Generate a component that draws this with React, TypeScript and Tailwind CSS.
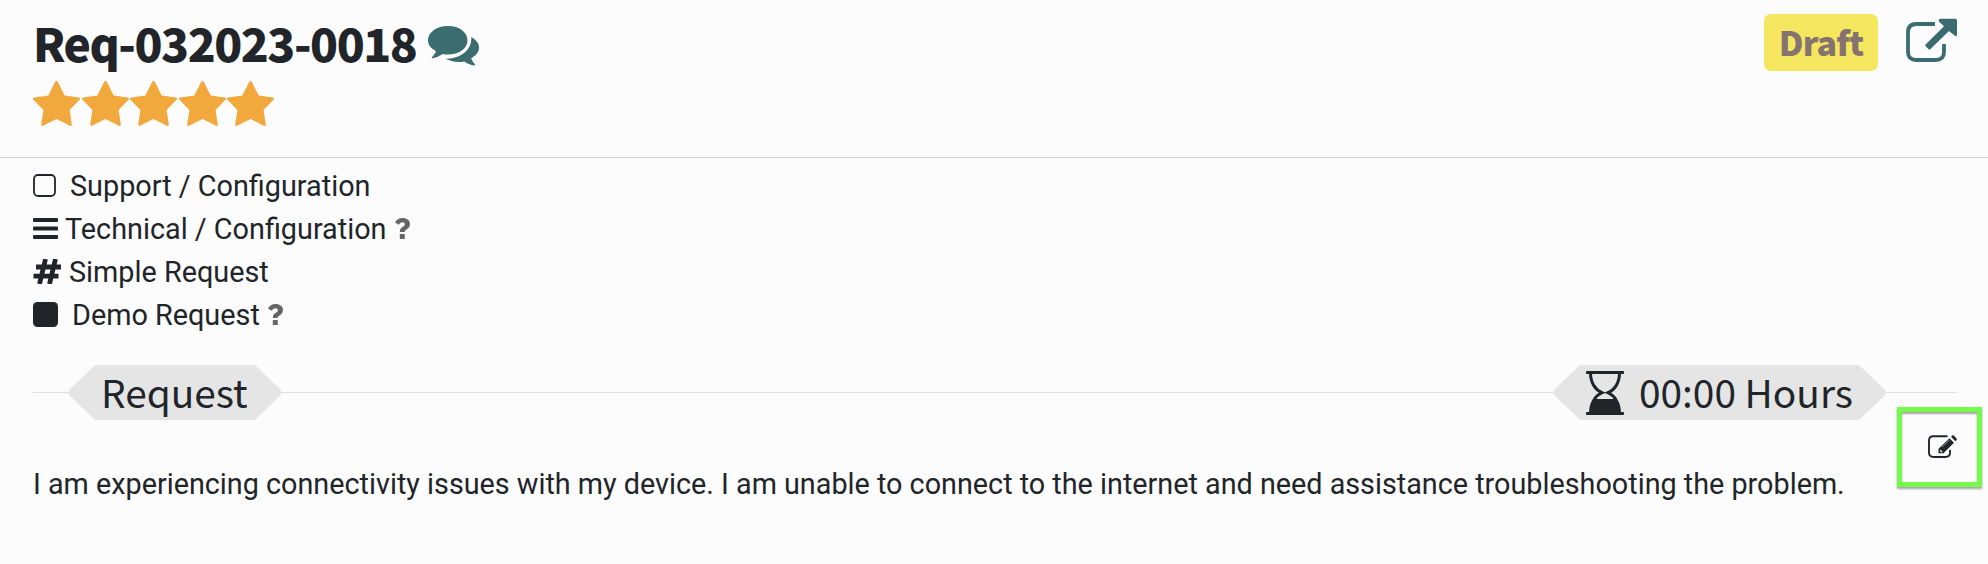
import type { ReactNode } from "react";

const INK = "#212529";

function CommentsIcon() {
  return (
    <svg width="51" height="40" viewBox="0 0 51 40" fill="#3b6c70">
      <path d="M20 0C31 0 39.500 6 39.500 14.300S31 28.500 20 28.500c-1.900 0-3.700-.1-5.400-.5C11.500 30.300 8 31.800 4.500 32.300c-.7.1-1-.6-.6-1.100C5.700 29.200 7.200 27.500 8 25.200 3 22.600 0 18.800 0 14.300 0 6 9 0 20 0Z" />
      <path d="M43.300 11C48 13.600 51 17.500 51 21.500c0 4.300-3 8.300-7.800 10.700.8 2.300 2 4 3.600 5.900.5.600.1 1.400-.7 1.300-3.700-.6-6.900-1.900-9.700-4-7 1.200-13.500.2-18.600-2.600 6.500-.1 12.500-1.700 17.200-5 5.800-4 8.800-10 8.300-16.800Z" />
    </svg>
  );
}

function StarIcon() {
  return (
    <svg width="47" height="45" viewBox="0 0 47 45" fill="#f1a93d">
      <path d="M22.100.9c.6-1.200 2.200-1.200 2.800 0l6.800 13.700 14.100 2c1.300.2 1.600 1.300.7 2.200L36.600 29l2.200 14.500c.2 1.200-.9 1.800-1.900 1.300L23.500 38l-13.400 6.800c-1 .5-2.100-.1-1.900-1.300L10.400 29 .5 18.800c-.9-.9-.6-2 .7-2.200l14.100-2Z" />
    </svg>
  );
}

function ExternalLinkIcon() {
  return (
    <svg width="51" height="44" viewBox="0 0 51 44">
      <path
        d="M29 6H10.500Q2 6 2 14V34Q2 42 10.500 42H29.500Q38 42 38 34V26"
        fill="none"
        stroke="#3b6c70"
        strokeWidth="3.800"
      />
      <path
        d="M34.500.8H49.500q1.500 0 1.500 1.500V17q0 2-1.800 1L43 13 24.300 31.300q-.8.8-1.600 0L19.600 28.200q-.8-.8 0-1.600L38 8.200 33.300 4Q31.800.8 34.500.8Z"
        fill="#3b6c70"
      />
    </svg>
  );
}

function SquareOutlineIcon() {
  return (
    <svg width="23" height="23" viewBox="0 0 23 23">
      <rect x="1" y="1" width="21" height="21" rx="4" fill="none" stroke={INK} strokeWidth="1.800" />
    </svg>
  );
}

function BarsIcon() {
  return (
    <svg width="25" height="21" viewBox="0 0 25 21" fill={INK}>
      <rect width="25" height="4" rx="1" />
      <rect y="8.500" width="25" height="4" rx="1" />
      <rect y="17" width="25" height="4" rx="1" />
    </svg>
  );
}

function HashIcon() {
  return (
    <svg width="28" height="25" viewBox="0 0 28 25" fill="none" stroke={INK} strokeWidth="4.800">
      <path d="M12.500 0 6.500 25M22.500 0 16.500 25M3 8H28M.5 17.200H25.500" />
    </svg>
  );
}

function SquareIcon() {
  return (
    <svg width="25" height="25" viewBox="0 0 25 25" fill={INK}>
      <rect width="25" height="25" rx="4.500" />
    </svg>
  );
}

function QuestionIcon() {
  return (
    <svg width="15" height="21" viewBox="0 0 15 21" fill="#666666">
      <path d="M0 4.500C1.600 1.500 4 0 7.500 0 12 0 15 2.500 15 6c0 2.700-1.500 4.200-3.400 5.400-1.400.9-1.900 1.300-1.900 2.600H4.900c-.1-2.800.7-4 2.800-5.300C9.200 7.800 9.800 7.300 9.800 6.200 9.800 5 8.800 4.300 7.400 4.300 5.800 4.300 4.800 5.200 3.700 6.800Z" />
      <rect x="4.800" y="16" width="5" height="5" rx=".5" />
    </svg>
  );
}

function HourglassIcon() {
  return (
    <svg width="38" height="44" viewBox="0 0 38 44">
      <path
        d="M4.500 2C4.500 12 9.500 19 16 21.700 9.500 24.500 4.500 32 4.500 42M33.500 2C33.500 12 28.500 19 22 21.700 28.500 24.500 33.500 32 33.500 42"
        fill="none"
        stroke={INK}
        strokeWidth="3"
      />
      <path d="M9 28H29C32.500 31.500 33.600 36 34 42H4C4.400 36 5.500 31.500 9 28Z" fill={INK} />
      <rect width="38" height="3" rx=".8" fill={INK} />
      <rect y="41" width="38" height="3" rx=".8" fill={INK} />
    </svg>
  );
}

function EditIcon() {
  return (
    <svg width="29" height="23" viewBox="0 0 29 23">
      <path
        d="M19.500 1.300H5.500Q1 1.300 1 5.500V17.500Q1 22 5.500 22H17.500Q22 22 22 17.500V15"
        fill="none"
        stroke={INK}
        strokeWidth="1.900"
      />
      <path d="M21.500 3.200 26 7.700 15.500 18.200H10.500V13.700Z" fill={INK} />
      <path d="M23 1.800 24.200.6q.8-.8 1.600 0L28.500 3.400q.7.8 0 1.600L27.300 6.200Z" fill={INK} />
      <path d="M12.200 14.500 14.800 17 13.500 17.500 11.700 15.800Z" fill="#fcfcfc" />
      <path d="M14 12 21.500 5" stroke="#aaaaaa" strokeWidth=".8" />
    </svg>
  );
}

const DETAILS = [
  { label: "Support / Configuration", icon: <SquareOutlineIcon />, gap: "pl-[14px]", help: false },
  { label: "Technical / Configuration", icon: <BarsIcon />, gap: "pl-[7px]", help: true },
  { label: "Simple Request", icon: <HashIcon />, gap: "pl-[8px]", help: false },
  { label: "Demo Request", icon: <SquareIcon />, gap: "pl-[14px]", help: true },
];

/** Grey hexagonal label sitting on the divider line. */
function Chip({ width, children }: { width: string; children: ReactNode }) {
  return (
    <div
      className={`${width} flex h-[55px] items-center bg-[#e5e5e5] font-['Noto_Sans_CJK_SC',sans-serif] text-[38.800px] leading-[53px] whitespace-nowrap [clip-path:polygon(0_25px,26px_0,calc(100%-26px)_0,100%_25px,100%_30px,calc(100%-26px)_100%,26px_100%,0_30px)]`}
    >
      {children}
    </div>
  );
}

export default function App() {
  return (
    <div className="relative h-[564px] w-[1988px] overflow-hidden bg-[#fcfcfc] font-[Roboto,sans-serif] text-[#212529]">
      <header className="flex h-[158px] justify-between border-b border-[#d2d2d2] pr-[31px] pl-[33px]">
        <div>
          <div className="flex h-[80px] items-start">
            <h1 className="w-[395px] pt-[12px] font-['Noto_Sans_CJK_SC',sans-serif] text-[46px] leading-[60px] font-black tracking-[-1.450px] whitespace-nowrap">
              Req-032023-0018
            </h1>
            <div className="pt-[26px]">
              <CommentsIcon />
            </div>
          </div>
          <div className="flex gap-[1.600px] pt-[1px]">
            {[1, 2, 3, 4, 5].map((n) => (
              <StarIcon key={n} />
            ))}
          </div>
        </div>
        <div className="flex items-start gap-[28px]">
          <span className="mt-[14px] flex h-[57px] w-[114px] items-center justify-center rounded-[7px] bg-[#f4e65f] font-['Noto_Sans_CJK_SC',sans-serif] text-[34px] leading-[55px] font-black tracking-[-0.800px] text-[#857370]">
            <span className="-mt-[2px]">Draft</span>
          </span>
          <div className="pt-[18px]">
            <ExternalLinkIcon />
          </div>
        </div>
      </header>

      <ul className="pt-[6px] pl-[33px]">
        {DETAILS.map((d) => (
          <li key={d.label} className="flex h-[43px] items-center text-[28.800px] leading-[43px]">
            {d.icon}
            <span className={`${d.gap} pt-[2px]`}>{d.label}</span>
            {d.help && (
              <span className="pl-[8px]">
                <QuestionIcon />
              </span>
            )}
          </li>
        ))}
      </ul>

      <div className="mt-[29px] flex h-[55px] items-center pr-[31px] pl-[33px]">
        <div className="h-px w-[36px] bg-[#e0e0e0]" />
        <Chip width="w-[212px]">
          <span className="-mt-[2px] pl-[32px]">Request</span>
        </Chip>
        <div className="h-px flex-1 bg-[#e0e0e0]" />
        <Chip width="w-[331px]">
          <span className="pl-[32px]">
            <HourglassIcon />
          </span>
          <span className="-mt-[2px] pl-[15px]">00:00 Hours</span>
        </Chip>
        <div className="h-px w-[72px] bg-[#e0e0e0]" />
      </div>

      <p className="pt-[43px] pl-[33px] text-[28.780px] leading-[43px] whitespace-nowrap">
        I am experiencing connectivity issues with my device. I am unable to connect to the internet
        and need assistance troubleshooting the problem.
      </p>

      {/* highlight drawn over the edit button */}
      <div className="absolute top-[407px] left-[1897px] h-[80px] w-[85px] border-[5px] border-[#75f94c] pt-[23px] pl-[26px] shadow-[0_2px_2px_rgba(0,0,0,0.35),inset_0_2px_2px_rgba(0,0,0,0.35)]">
        <EditIcon />
      </div>
    </div>
  );
}
